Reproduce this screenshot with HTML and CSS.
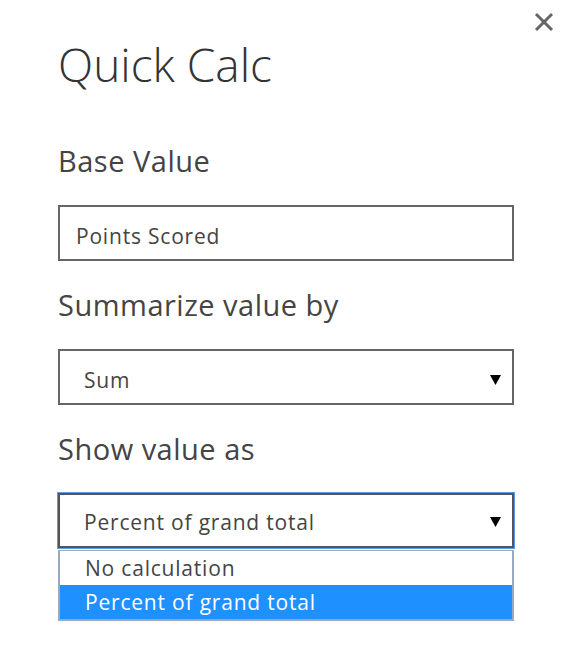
FILE: index.html
```html
<!DOCTYPE html>
<html lang="en">
<head>
<meta charset="utf-8">
<title>Quick Calc</title>
<link rel="stylesheet" href="styles.css">
</head>
<body>
<div class="panel">
  <button class="close" aria-label="Close">
    <svg width="20" height="20" viewBox="0 0 20 20"><path d="M2 2 L18 18 M18 2 L2 18" stroke="#666" stroke-width="3" fill="none"/></svg>
  </button>
  <h1 class="title">Quick Calc</h1>

  <div class="field">
    <div class="label">Base Value</div>
    <div class="input">Points Scored</div>
  </div>

  <div class="field">
    <div class="label">Summarize value by</div>
    <div class="select"><span class="value">Sum</span><svg class="arrow" width="11" height="10" viewBox="0 0 11 10"><path d="M0 0 H11 L5.5 10 Z" fill="#000"/></svg></div>
  </div>

  <div class="field">
    <div class="label">Show value as</div>
    <div class="select focused"><span class="value">Percent of grand total</span><svg class="arrow" width="11" height="10" viewBox="0 0 11 10"><path d="M0 0 H11 L5.5 10 Z" fill="#000"/></svg></div>
    <ul class="listbox">
      <li class="option">No calculation</li>
      <li class="option selected">Percent of grand total</li>
    </ul>
  </div>
</div>
</body>
</html>
```
FILE: styles.css
```css
html, body {
  margin: 0;
  padding: 0;
  background: #fff;
}
body {
  font-family: "Open Sans", "Noto Sans", "Liberation Sans", sans-serif;
  color: #444;
}
.panel {
  position: relative;
  width: 456px;
  padding: 34px 0 0 58px;
  display: flex;
  flex-direction: column;
}
.close {
  position: absolute;
  top: 12px;
  left: 534px;
  width: 20px;
  height: 20px;
  padding: 0;
  border: 0;
  background: none;
  display: flex;
}
.title {
  margin: 0;
  font-size: 46px;
  font-weight: 300;
  line-height: 60px;
  color: #333;
  height: 60px;
}
.field {
  display: flex;
  flex-direction: column;
  margin-top: 26px;
}
.field:first-of-type {
  margin-top: 49px;
}
.label {
  font-size: 29px;
  font-weight: 400;
  letter-spacing: 0.5px;
  line-height: 36px;
  height: 36px;
  margin-bottom: 26px;
  color: #444;
}
.input, .select {
  box-sizing: border-box;
  height: 56px;
  border: 2px solid #666;
  font-size: 21px;
  letter-spacing: 0.8px;
  line-height: 46px;
  padding-top: 6px;
  color: #444;
}
.input {
  padding-left: 16px;
}
.select {
  display: flex;
  align-items: flex-start;
  justify-content: space-between;
  padding-left: 24px;
  padding-right: 11px;
}
.select .arrow {
  margin-top: 18px;
}
.select.focused {
  height: 55px;
  border-color: #555;
  box-shadow: 0 0 0 1px #5b9be6;
  padding-top: 4px;
}
.listbox {
  list-style: none;
  margin: 2px 0 0;
  padding: 0;
  border: 2px solid #9aa9c2;
  border-top-width: 1px;
}
.option {
  font-size: 21px;
  letter-spacing: 0.8px;
  line-height: 34px;
  height: 34px;
  padding-left: 25px;
  color: #444;
}
.option.selected {
  background: #1e90ff;
  color: #fff;
}
```
